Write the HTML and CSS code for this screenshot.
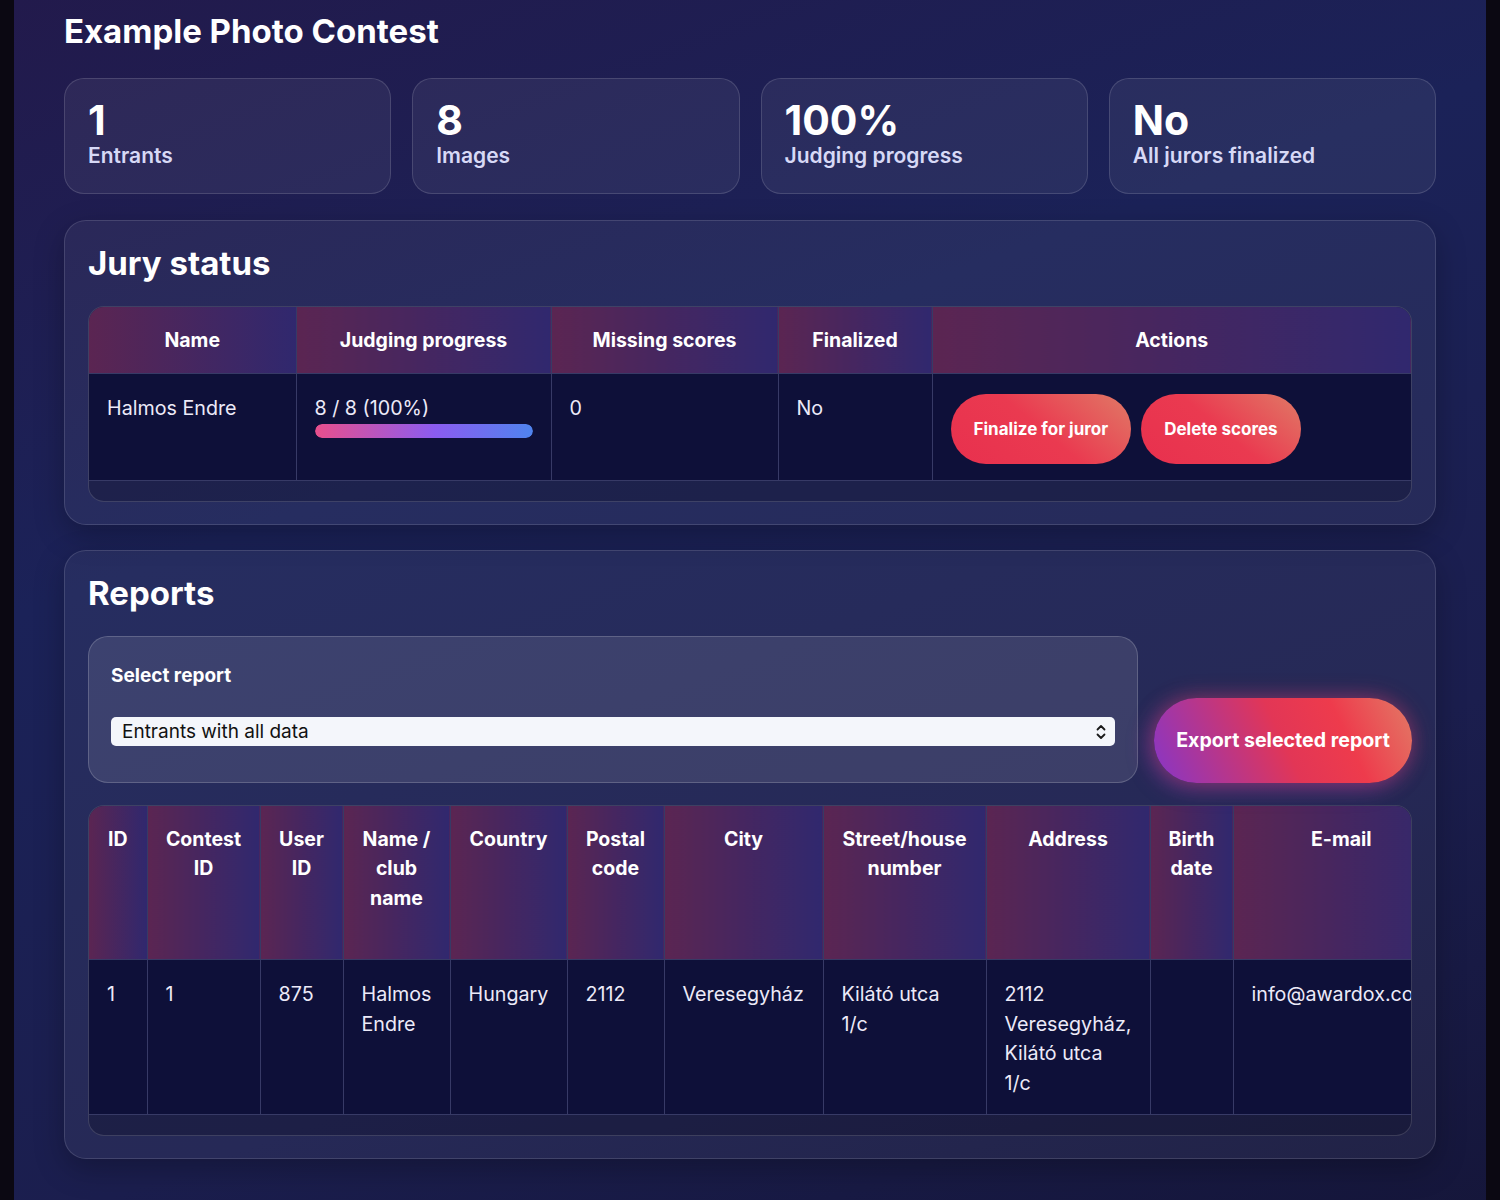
FILE: index.html
```html
<!DOCTYPE html>
<html lang="en">
<head>
    <meta charset="UTF-8">
    <title>Example Photo Contest - Admin</title>
    <link rel="stylesheet" href="styles.css">
</head>
<body>

<div class="page">
    <h1 class="contest-title">Example Photo Contest</h1>

    <div class="stats">
        <div class="stat">
            <div class="stat-value">1</div>
            <div class="stat-label">Entrants</div>
        </div>
        <div class="stat">
            <div class="stat-value">8</div>
            <div class="stat-label">Images</div>
        </div>
        <div class="stat">
            <div class="stat-value">100%</div>
            <div class="stat-label">Judging progress</div>
        </div>
        <div class="stat">
            <div class="stat-value">No</div>
            <div class="stat-label">All jurors finalized</div>
        </div>
    </div>

    <section class="card">
        <h2>Jury status</h2>
        <div class="table-wrap">
            <table class="jury-table">
                <colgroup>
                    <col style="width:207px">
                    <col style="width:255px">
                    <col style="width:227px">
                    <col style="width:154px">
                    <col>
                </colgroup>
                <thead>
                    <tr>
                        <th>Name</th>
                        <th>Judging progress</th>
                        <th>Missing scores</th>
                        <th>Finalized</th>
                        <th>Actions</th>
                    </tr>
                </thead>
                <tbody>
                    <tr>
                        <td>Halmos Endre</td>
                        <td>
                            8 / 8 (100%)
                            <div class="progress"><div class="progress-bar" style="width:100%"></div></div>
                        </td>
                        <td>0</td>
                        <td>No</td>
                        <td>
                            <div class="actions">
                                <button class="btn btn-danger">Finalize for juror</button>
                                <button class="btn btn-danger">Delete scores</button>
                            </div>
                        </td>
                    </tr>
                </tbody>
            </table>
        </div>
    </section>

    <section class="card">
        <h2>Reports</h2>
        <div class="report-controls">
            <div class="report-picker">
                <label for="report">Select report</label>
                <div class="select-box">
                    <select id="report">
                        <option>Entrants with all data</option>
                    </select>
                    <svg class="select-arrows" width="10" height="16" viewBox="0 0 10 16" fill="none" stroke="#1a1a1a" stroke-width="1.8" stroke-linecap="round" stroke-linejoin="round">
                        <path d="M1.5 5.5 5 2l3.5 3.5"/>
                        <path d="M1.5 10.5 5 14l3.5-3.5"/>
                    </svg>
                </div>
            </div>
            <button class="btn btn-export">Export selected report</button>
        </div>

        <div class="table-wrap">
            <table class="report-table">
                <colgroup>
                    <col style="width:58px">
                    <col style="width:113px">
                    <col style="width:83px">
                    <col style="width:107px">
                    <col style="width:117px">
                    <col style="width:97px">
                    <col style="width:159px">
                    <col style="width:163px">
                    <col style="width:164px">
                    <col style="width:83px">
                    <col style="width:216px">
                </colgroup>
                <thead>
                    <tr>
                        <th>ID</th>
                        <th>Contest ID</th>
                        <th>User ID</th>
                        <th>Name / club name</th>
                        <th>Country</th>
                        <th>Postal code</th>
                        <th>City</th>
                        <th>Street/house number</th>
                        <th>Address</th>
                        <th>Birth date</th>
                        <th>E-mail</th>
                    </tr>
                </thead>
                <tbody>
                    <tr>
                        <td>1</td>
                        <td>1</td>
                        <td>875</td>
                        <td>Halmos Endre</td>
                        <td>Hungary</td>
                        <td>2112</td>
                        <td>Veresegyház</td>
                        <td>Kilátó utca 1/c</td>
                        <td>2112 Veresegyház, Kilátó utca 1/c</td>
                        <td></td>
                        <td>info@awardox.com</td>
                    </tr>
                </tbody>
            </table>
        </div>
    </section>
</div>

</body>
</html>
```

FILE: styles.css
```css
* {
    box-sizing: border-box;
}

body {
    margin: 0;
    font-family: 'Inter', 'Liberation Sans', sans-serif;
    background-color: #0b0812;
    color: #fff;
}

.page {
    margin: 0 14px;
    padding: 11px 50px 40px;
    background: linear-gradient(160deg, #221a4c 0%, #1b2258 35%, #1b1e4e 70%, #15163a 100%);
    border-radius: 0 0 24px 24px;
    min-height: 1200px;
}

.contest-title {
    margin: 0 0 27px;
    font-size: 33px;
    line-height: 40px;
    font-weight: 700;
}

/* stat cards */

.stats {
    display: grid;
    grid-template-columns: repeat(4, 1fr);
    gap: 21px;
    margin-bottom: 26px;
}

.stat {
    height: 116px;
    padding: 19px 23px 0;
    border-radius: 20px;
    background: rgba(255, 255, 255, 0.06);
    border: 1px solid rgba(255, 255, 255, 0.14);
}

.stat-value {
    font-size: 41px;
    line-height: 44px;
    font-weight: 700;
}

.stat-label {
    font-size: 21px;
    line-height: 28px;
    font-weight: 600;
    color: #d7d9f6;
}

/* section cards */

.card {
    padding: 22px 23px;
    border-radius: 22px;
    background: rgba(255, 255, 255, 0.05);
    border: 1px solid rgba(255, 255, 255, 0.13);
    box-shadow: 0 10px 30px rgba(0, 0, 0, 0.25);
    margin-bottom: 25px;
}

.card h2 {
    margin: 0 0 23px;
    font-size: 33px;
    line-height: 40px;
    font-weight: 700;
}

/* tables */

.table-wrap {
    border: 1px solid rgba(255, 255, 255, 0.15);
    border-radius: 16px;
    overflow: hidden;
    padding-bottom: 20px;
    background: rgba(8, 8, 28, 0.28);
}

table {
    border-collapse: collapse;
    table-layout: fixed;
    font-size: 19.7px;
    line-height: 29.5px;
}

th, td {
    padding: 19px 18px 17px;
    border-right: 1px solid #373a66;
    border-bottom: 1px solid #373a66;
}

td {
    padding-top: 20px;
    padding-bottom: 16px;
}

th:last-child, td:last-child {
    border-right: none;
}

th {
    font-size: 19.5px;
    font-weight: 700;
    color: #fff;
    text-align: center;
    vertical-align: top;
    background: linear-gradient(90deg, #5b2552, #30286e);
}

td {
    color: #eceaf8;
    font-weight: 400;
    text-align: left;
    vertical-align: top;
    background-color: #0e1039;
}

.jury-table {
    width: 100%;
}

.jury-table th {
    vertical-align: middle;
}

.report-table {
    width: 1360px;
}

.report-table thead tr,
.report-table tbody tr {
    height: 154px;
}

.progress {
    height: 14px;
    margin-top: 1px;
    border-radius: 7px;
    overflow: hidden;
}

.progress-bar {
    height: 100%;
    border-radius: 7px;
    background: linear-gradient(90deg, #e84f8c, #8b5cf0 55%, #4f84ee);
}

/* buttons */

.actions {
    display: flex;
    gap: 10px;
}

.btn {
    border: none;
    border-radius: 999px;
    color: #fff;
    font-family: inherit;
    font-weight: 700;
    cursor: pointer;
}

.btn-danger {
    height: 70px;
    padding: 0 23px;
    font-size: 17px;
    background: linear-gradient(40deg, #e8304e 0%, #ea3a50 50%, #e07a66 100%);
}

.btn-export {
    flex: none;
    align-self: flex-end;
    width: 258px;
    height: 85px;
    padding: 0 18px;
    font-size: 19.6px;
    background: linear-gradient(65deg, #8636c8 0%, #e23656 50%, #ee3b4c 72%, #e27a66 100%);
    box-shadow: 0 0 22px rgba(236, 60, 80, 0.45), -6px 6px 22px rgba(140, 60, 210, 0.35);
}

/* report picker */

.report-controls {
    display: flex;
    gap: 16px;
    margin-bottom: 22px;
}

.report-picker {
    flex: 1;
    padding: 26px 22px 36px;
    border-radius: 20px;
    background: rgba(255, 255, 255, 0.1);
    border: 1px solid rgba(255, 255, 255, 0.18);
}

.report-picker label {
    display: block;
    font-size: 19px;
    line-height: 26px;
    font-weight: 700;
    margin-bottom: 28px;
}

.select-box {
    position: relative;
}

.select-box select {
    display: block;
    width: 100%;
    height: 29px;
    padding: 0 30px 0 11px;
    border: none;
    border-radius: 5px;
    background: #f4f6fb;
    color: #111;
    font-family: inherit;
    font-size: 19px;
    appearance: none;
    -webkit-appearance: none;
}

.select-arrows {
    position: absolute;
    right: 9px;
    top: 7px;
    pointer-events: none;
}
```
